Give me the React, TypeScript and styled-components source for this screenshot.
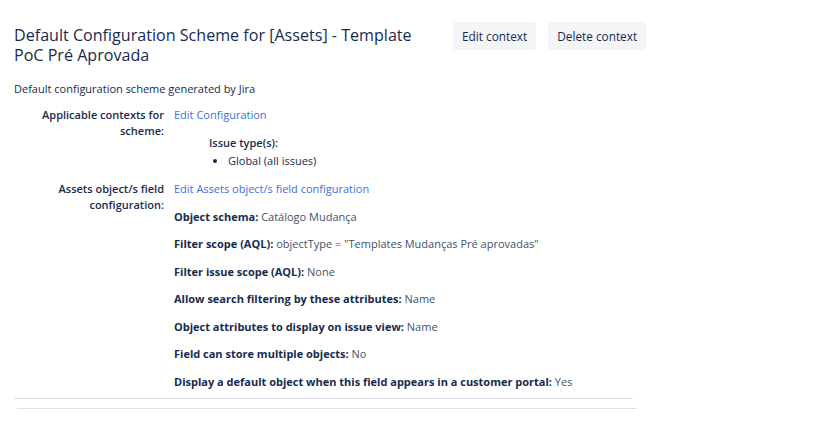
import React from "react";
import styled, { createGlobalStyle } from "styled-components";

const Global = createGlobalStyle`
  html, body { margin: 0; padding: 0; background: #fff; }
  body { font-family: "Open Sans", "Noto Sans", sans-serif; color: #172b4d; }
`;

const Page = styled.div`
  padding: 22px 0 0 14px;
  width: 623px;
`;

const Header = styled.div`
  display: flex;
  align-items: flex-start;
`;

const Title = styled.h1`
  margin: 3px 0 0 0;
  width: 425px;
  flex: 0 0 425px;
  font-size: 16.1px;
  line-height: 20px;
  font-weight: 500;
  color: #172b4d;
`;

const Actions = styled.div`
  display: flex;
  gap: 12px;
  margin-left: 14px;
`;

const Button = styled.button`
  height: 28px;
  padding: 0 9px;
  border: none;
  border-radius: 3px;
  background: #f4f5f7;
  color: #172b4d;
  font-family: inherit;
  font-size: 11.8px;
  white-space: nowrap;
  cursor: pointer;
`;

const Description = styled.p`
  margin: 16px 0 0 0;
  font-size: 11px;
  line-height: 16px;
`;

const FieldTable = styled.div`
  display: grid;
  grid-template-columns: 150px 1fr;
  column-gap: 10px;
  row-gap: 12px;
  width: 619px;
  margin-top: 10px;
  padding-bottom: 8px;
  border-bottom: 1px solid #dfe1e6;
  font-size: 11px;
  line-height: 16px;
`;

const Label = styled.div`
  text-align: right;
  font-weight: 600;
  color: #172b4d;
`;

const Value = styled.div``;

const Link = styled.a`
  text-decoration: none;
  color: #3d6fd9;
`;

const Sub = styled.div`
  margin: 12px 0 0 35px;
`;

const SubTitle = styled.div`
  font-weight: 600;
`;

const Bullets = styled.ul`
  margin: 2px 0 0 0;
  padding-left: 19px;
`;

const Detail = styled.div`
  margin-top: 11.5px;
  & b { font-weight: 700; }
  & span { color: #42526e; }
`;

const Rule = styled.hr`
  margin: 9px 0 0 3px;
  border: none;
  border-top: 1px solid #dfe1e6;
  width: 620px;
`;

const details: [string, string][] = [
  ["Object schema:", "Catálogo Mudança"],
  ["Filter scope (AQL):", 'objectType = "Templates Mudanças Pré aprovadas"'],
  ["Filter issue scope (AQL):", "None"],
  ["Allow search filtering by these attributes:", "Name"],
  ["Object attributes to display on issue view:", "Name"],
  ["Field can store multiple objects:", "No"],
  ["Display a default object when this field appears in a customer portal:", "Yes"],
];

export default function App() {
  return (
    <>
      <Global />
      <Page>
        <Header>
          <Title>Default Configuration Scheme for [Assets] - Template PoC Pré Aprovada</Title>
          <Actions>
            <Button>Edit context</Button>
            <Button>Delete context</Button>
          </Actions>
        </Header>
        <Description>Default configuration scheme generated by Jira</Description>
        <FieldTable>
          <Label>Applicable contexts for scheme:</Label>
          <Value>
            <Link href="#">Edit Configuration</Link>
            <Sub>
              <SubTitle>Issue type(s):</SubTitle>
              <Bullets>
                <li>Global (all issues)</li>
              </Bullets>
            </Sub>
          </Value>
          <Label>Assets object/s field configuration:</Label>
          <Value>
            <Link href="#">Edit Assets object/s field configuration</Link>
            {details.map(([k, v]) => (
              <Detail key={k}>
                <b>{k}</b> <span>{v}</span>
              </Detail>
            ))}
          </Value>
        </FieldTable>
        <Rule />
      </Page>
    </>
  );
}
